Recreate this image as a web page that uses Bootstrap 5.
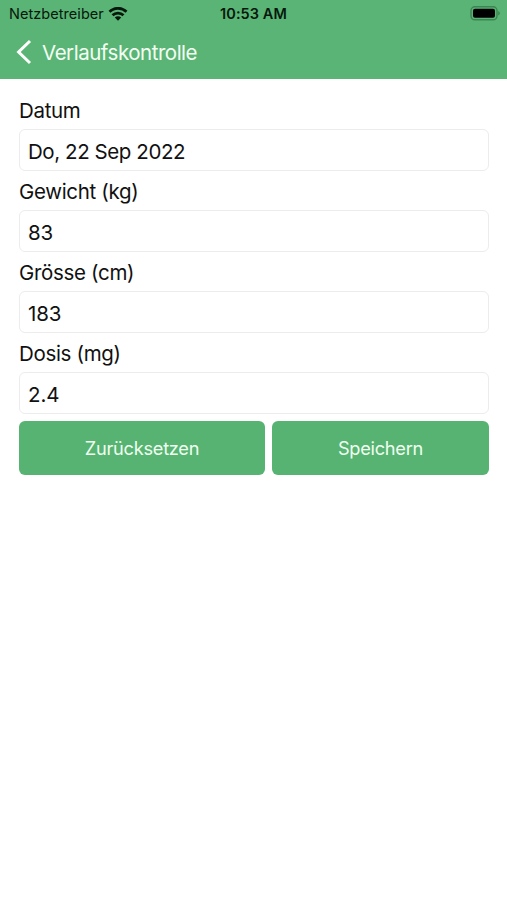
<!DOCTYPE html>
<html lang="de">
<head>
<meta charset="utf-8">
<meta name="viewport" content="width=device-width, initial-scale=1">
<title>Verlaufskontrolle</title>
<link href="https://cdn.jsdelivr.net/npm/bootstrap@5.3.0/dist/css/bootstrap.min.css" rel="stylesheet">
<style>
  body { font-family: Inter, "Liberation Sans", sans-serif; color: #111; background: #fff; }
  .app-header { background: #5ab475; height: 79px; }
  .status-bar { height: 27px; padding: 0 7px 0 9px; color: #06180c; font-size: 14.5px; line-height: 27px; }
  .status-bar .carrier { letter-spacing: .05px; }
  .status-bar .clock { font-weight: 600; letter-spacing: .08px; padding-right: 2px; }
  .title-bar { height: 50px; padding-left: 16px; gap: 10px; }
  .title-bar h1 { font-size: 20.5px; font-weight: 400; line-height: 48px; padding-top: 2px; letter-spacing: -.47px; color: #f3fff3; }
  .entry-form { padding: 11px 18px 0 19px; }
  .entry-form .form-label { height: 39px; line-height: 39px; padding-top: 1px; font-size: 20.5px; letter-spacing: -.32px; }
  .entry-form .form-control { height: 42px; padding: 2px 8px 0; border: 1px solid #ececec; border-radius: 6px; font-size: 20.5px; letter-spacing: -.42px; color: #111; }
  .entry-form .numeric { letter-spacing: -.1px; }
  .form-actions { padding-top: 7px; gap: 7px; }
  .btn-green { height: 54px; padding: 1px 0 0; border: 0; border-radius: 6px; background: #57b372; color: #effff0; font-size: 18.2px; letter-spacing: -.25px; }
  .btn-reset { width: 246px; }
</style>
</head>
<body>
<header class="app-header">
  <div class="status-bar row g-0 align-items-center">
    <div class="col d-flex align-items-center">
      <span class="carrier">Netzbetreiber</span>
      <svg class="ms-1" width="20" height="14" viewBox="0 0 20 14" fill="none" stroke="#06180c" stroke-width="2.7">
        <path d="M1.5 4.8a12.1 12.1 0 0 1 17 0"/>
        <path d="M4.5 8.3a7.8 7.8 0 0 1 11 0"/>
        <path d="M10 13.7 6.8 10.6a4.6 4.6 0 0 1 6.4 0z" fill="#06180c" stroke="none"/>
      </svg>
    </div>
    <div class="col-auto clock">10:53 AM</div>
    <div class="col d-flex justify-content-end">
      <svg width="30" height="15" viewBox="0 0 30 15">
        <rect x="1" y=".8" width="26" height="13" rx="3.8" fill="none" stroke="#3d8552" stroke-width="1.4"/>
        <rect x="3" y="2.8" width="22" height="9" rx="2" fill="#000"/>
        <path d="M28.2 5.2c2.2.7 2.2 3.5 0 4.2z" fill="#3d8552"/>
      </svg>
    </div>
  </div>
  <div class="title-bar d-flex align-items-center">
    <svg width="16" height="26" viewBox="0 0 16 26" fill="none" stroke="#fff" stroke-width="3"><path d="M14 2 2.6 13 14 24"/></svg>
    <h1 class="m-0">Verlaufskontrolle</h1>
  </div>
</header>
<main>
  <form class="entry-form">
    <label class="form-label d-block m-0" for="datum">Datum</label>
    <input class="form-control" id="datum" type="text" value="Do, 22 Sep 2022">
    <label class="form-label d-block m-0" for="gewicht">Gewicht (kg)</label>
    <input class="form-control numeric" id="gewicht" type="text" value="83">
    <label class="form-label d-block m-0" for="groesse">Grösse (cm)</label>
    <input class="form-control numeric" id="groesse" type="text" value="183">
    <label class="form-label d-block m-0" for="dosis">Dosis (mg)</label>
    <input class="form-control numeric" id="dosis" type="text" value="2.4">
    <div class="form-actions d-flex">
      <button class="btn btn-green btn-reset" type="button">Zurücksetzen</button>
      <button class="btn btn-green flex-fill" type="button">Speichern</button>
    </div>
  </form>
</main>
<script src="https://cdn.jsdelivr.net/npm/bootstrap@5.3.0/dist/js/bootstrap.bundle.min.js"></script>
</body>
</html>
